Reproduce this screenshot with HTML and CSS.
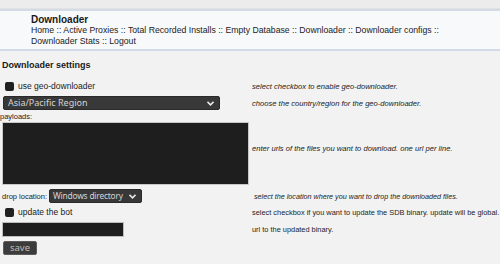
FILE: index.html
```html
<html>
    <head>
        <meta charset="UTF-8">
        <link rel="stylesheet" href="styles.css">
    </head>
    <body>
        <div class="topstrip"></div>
        <div class="header">
            <div class="title">Downloader</div>
            <div class="nav">
                Home :: Active Proxies :: Total Recorded Installs :: Empty Database :: Downloader :: Downloader configs ::<br>
                Downloader Stats :: Logout
            </div>
        </div>

        <div class="section-title">Downloader settings</div>

        <form class="settings">
            <div class="row row-check1">
                <div class="field">
                    <label class="check"><span class="box"></span>use geo-downloader</label>
                </div>
                <div class="desc italic">select checkbox to enable geo-downloader.</div>
            </div>

            <div class="row row-region">
                <div class="field">
                    <span class="select wide">Asia/Pacific Region
                        <svg class="chev" width="7" height="5" viewBox="0 0 7 5"><path d="M0.5 0.8 L3.5 3.8 L6.5 0.8" stroke="#e8e8e8" stroke-width="1.6" fill="none"/></svg>
                    </span>
                </div>
                <div class="desc italic">choose the country/region for the geo-downloader.</div>
            </div>

            <div class="row row-payloads">
                <div class="field">
                    <div class="lbl">payloads:</div>
                    <div class="textarea"></div>
                </div>
                <div class="desc italic">enter urls of the files you want to download. one url per line.</div>
            </div>

            <div class="row row-drop">
                <div class="field drop">
                    <span class="lbl">drop location:</span>
                    <span class="select narrow">Windows directory
                        <svg class="chev" width="7" height="5" viewBox="0 0 7 5"><path d="M0.5 0.8 L3.5 3.8 L6.5 0.8" stroke="#e8e8e8" stroke-width="1.6" fill="none"/></svg>
                    </span>
                </div>
                <div class="desc italic tight">select the location where you want to drop the downloaded files.</div>
            </div>

            <div class="row row-check2">
                <div class="field">
                    <label class="check"><span class="box"></span>update the bot</label>
                </div>
                <div class="desc plain">select checkbox if you want to update the SDB binary. update will be global.</div>
            </div>

            <div class="row row-url">
                <div class="field">
                    <div class="input"></div>
                </div>
                <div class="desc plain">url to the updated binary.</div>
            </div>

            <div class="row row-save">
                <div class="field">
                    <span class="button">save</span>
                </div>
            </div>
        </form>
    </body>
</html>
```
FILE: styles.css
```css
html, body {
    margin: 0px;
    background: #f2f2f2;
    font-family: "Liberation Sans", Arial, sans-serif;
    font-size: 8.7px;
    color: #1a1a1a;
}

.topstrip {
    height: 8px;
    background: #ececec;
    border-bottom: 1px solid #e2e2e2;
}

.header {
    background: #f8f9fb;
    border-top: 2px solid #d3dbe7;
    border-bottom: 2px solid #d3dbe7;
    padding: 3px 0 2px 31px;
    line-height: 11px;
}
.title {
    font-weight: bold;
    font-size: 10px;
}
.nav {
    color: #222;
}

.section-title {
    font-weight: bold;
    font-size: 9px;
    margin: 9px 0 0 2px;
    line-height: 11px;
}

.settings {
    margin: 0;
    padding-top: 9px;
}

.row {
    display: flex;
    align-items: center;
}
.field {
    width: 250px;
    flex: none;
}
.desc {
    padding-left: 2px;
    color: #222;
    white-space: nowrap;
}
.desc.italic {
    font-style: italic;
    font-size: 7.6px;
}
.desc.tight {
    font-size: 7.2px;
}
.desc.plain {
    font-size: 7.4px;
}

.check {
    display: flex;
    align-items: center;
    gap: 4px;
    padding-left: 5px;
    font-size: 8.5px;
}
.box {
    width: 9px;
    height: 9px;
    background: #202020;
    border-radius: 2px;
}

.select {
    position: relative;
    display: inline-block;
    box-sizing: border-box;
    height: 14px;
    line-height: 12px;
    background: #383838;
    border: 1px solid #2a2a2a;
    border-radius: 2px;
    color: #d4d4d4;
    font-family: "Noto Sans", sans-serif;
    font-size: 9px;
    padding-left: 4px;
    white-space: nowrap;
}
.select.wide {
    width: 217px;
    margin-left: 3px;
}
.select.narrow {
    width: 93px;
    padding-left: 3px;
    font-size: 8.4px;
    letter-spacing: -0.2px;
}
.chev {
    position: absolute;
    right: 5px;
    top: 4px;
}

.row-check1 { height: 12px; }
.row-region { margin-top: 4px; }
.row-payloads { margin-top: 2px; }

.lbl {
    font-size: 7.5px;
    line-height: 9px;
    color: #222;
}
.textarea {
    margin: 1px 0 0 2px;
    width: 247px;
    height: 63px;
    box-sizing: border-box;
    background: #1e1e1e;
    border: 1px solid #c8c8c8;
}

.row-drop { margin-top: 4px; }
.drop {
    display: flex;
    align-items: center;
    gap: 2px;
    padding-left: 2px;
}

.row-check2 { margin-top: 3px; height: 12px; }
.row-url { margin-top: 4px; }
.input {
    margin-left: 2px;
    width: 122px;
    height: 15px;
    background: #1e1e1e;
    border: 1px solid #bdbdbd;
    box-sizing: border-box;
}

.row-save { margin-top: 4px; }
.button {
    display: inline-block;
    margin-left: 3px;
    width: 34px;
    height: 14px;
    box-sizing: border-box;
    background: #3c3c3c;
    border: 1px solid #5a5a5a;
    border-radius: 2px;
    color: #bdbdbd;
    text-align: center;
    line-height: 12px;
    font-family: "Noto Sans", sans-serif;
    font-size: 9.5px;
}
```
